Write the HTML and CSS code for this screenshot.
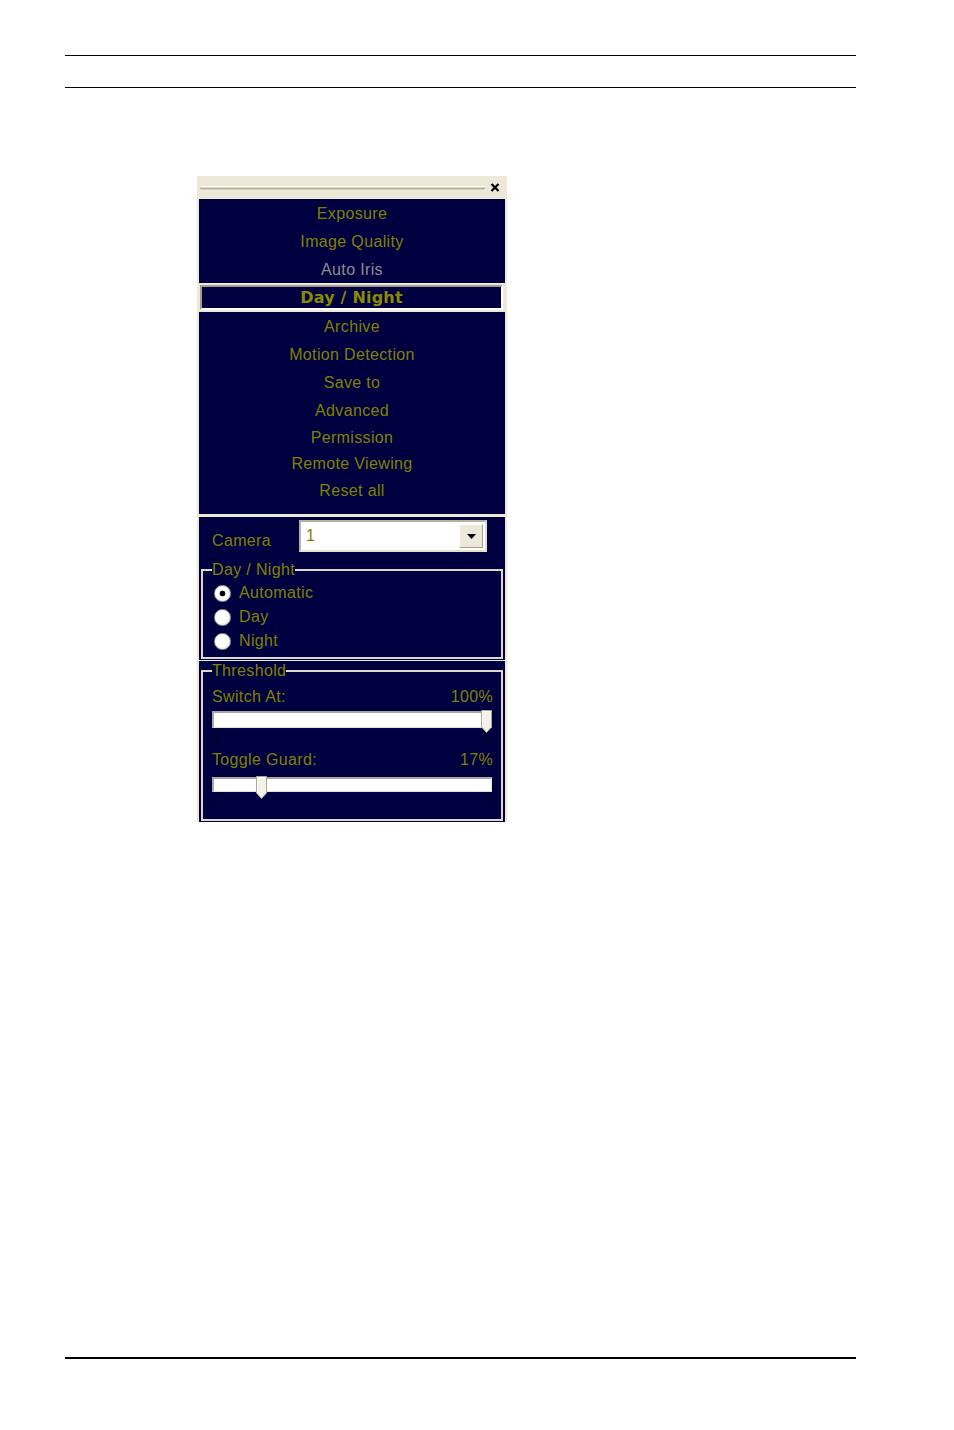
FILE: index.html
```html
<!DOCTYPE html>
<html>
<head>
<meta charset="utf-8">
<title>Day / Night settings</title>
<link rel="stylesheet" href="styles.css">
</head>
<body>
<div class="page">
  <div class="rule rule-top"></div>
  <div class="rule rule-second"></div>

  <div class="panel">
    <div class="titlebar">
      <div class="grip"></div>
      <svg class="close" width="10" height="9" viewBox="0 0 10 9"><path d="M1.5 1 L8.5 8 M8.5 1 L1.5 8" stroke="#000" stroke-width="2.2" fill="none"/></svg>
    </div>

    <div class="menu menu-a">
      <div class="item">Exposure</div>
      <div class="item">Image Quality</div>
      <div class="item disabled">Auto Iris</div>
    </div>

    <div class="sel-wrap"><div class="sel">Day / Night</div></div>

    <div class="menu menu-b">
      <div class="item">Archive</div>
      <div class="item">Motion Detection</div>
      <div class="item">Save to</div>
      <div class="item">Advanced</div>
      <div class="item tight">Permission</div>
      <div class="item tight">Remote Viewing</div>
      <div class="item">Reset all</div>
    </div>

    <div class="section section-camera">
      <div class="camera-row">
        <span class="label">Camera</span>
        <div class="combo">
          <span class="combo-value">1</span>
          <span class="combo-btn"><svg width="9" height="5" viewBox="0 0 9 5"><path d="M0 0 H9 L4.5 5 Z" fill="#000"/></svg></span>
        </div>
      </div>
      <fieldset class="group group-daynight">
        <legend>Day / Night</legend>
        <div class="radio-row"><span class="radio checked"></span><span>Automatic</span></div>
        <div class="radio-row"><span class="radio"></span><span>Day</span></div>
        <div class="radio-row"><span class="radio"></span><span>Night</span></div>
      </fieldset>
    </div>

    <div class="section section-threshold">
      <fieldset class="group group-threshold">
        <legend>Threshold</legend>
        <div class="value-row"><span>Switch At:</span><span>100%</span></div>
        <div class="slider">
          <div class="track track-1"></div>
          <svg class="thumb" style="left:269px" width="11" height="23" viewBox="0 0 11 23"><path d="M0.5 0.5 H10.5 V17 L5.5 22.5 L0.5 17 Z" fill="#F3F2EA" stroke="#A9A694" stroke-width="1"/><path d="M1.5 1.5 H9.5 M1.5 1.5 V16.5" stroke="#FFFFFF" stroke-width="1" fill="none"/></svg>
          <div class="ticks ticks-1"><i></i><i></i></div>
        </div>
        <div class="value-row row-2"><span>Toggle Guard:</span><span>17%</span></div>
        <div class="slider slider-2">
          <div class="track track-2"></div>
          <svg class="thumb" style="left:44px" width="11" height="23" viewBox="0 0 11 23"><path d="M0.5 0.5 H10.5 V17 L5.5 22.5 L0.5 17 Z" fill="#F3F2EA" stroke="#A9A694" stroke-width="1"/><path d="M1.5 1.5 H9.5 M1.5 1.5 V16.5" stroke="#FFFFFF" stroke-width="1" fill="none"/></svg>
          <div class="ticks ticks-2"><i></i><i></i></div>
        </div>
      </fieldset>
    </div>
  </div>

  <div class="rule rule-bottom"></div>
</div>
</body>
</html>
```

FILE: styles.css
```css
html, body {
  margin: 0;
  padding: 0;
  background: #ffffff;
}

.page {
  padding: 55px 0 0 65px;
  width: 791px;
  font-family: "Liberation Sans", Arial, sans-serif;
}

.rule {
  width: 791px;
  background: #000;
}
.rule-top { height: 1px; }
.rule-second { height: 1px; margin-top: 31px; }
.rule-bottom { height: 2px; margin-top: 535px; }

/* panel */
.panel {
  margin-top: 88px;
  margin-left: 132px;
  width: 310px;
  background: #ECE9D8;
  padding: 0 2px;
  box-sizing: border-box;
  font-size: 16px;
  letter-spacing: 0.35px;
  color: #808000;
}

.titlebar {
  height: 23px;
  display: flex;
  align-items: center;
  margin: 0 -2px;
  padding: 0 7px 0 3px;
}
.grip {
  flex: 1;
  height: 4px;
  margin-right: 5px;
  border-radius: 2px;
  background: linear-gradient(#ffffff 0 1px, #D9D6C7 1px 2px, #B3B09E 2px 3px, #D3D0C0 3px);
}
.close { display: block; }

/* menus */
.menu {
  background: #000040;
}
.menu .item {
  height: 28px;
  box-sizing: border-box;
  padding-top: 2px;
  line-height: 26px;
  text-align: center;
  white-space: nowrap;
}
.menu .item.tight {
  height: 26px;
  line-height: 24px;
}
.menu .item.disabled {
  color: #8C8C8C;
}
.menu-b {
  padding-bottom: 10px;
}

.sel-wrap {
  padding: 2px 2px 2px 1px;
  height: 29px;
  box-sizing: border-box;
}
.sel {
  height: 25px;
  box-sizing: border-box;
  border: 2px solid;
  border-color: #A19E8F #ffffff #ffffff #A19E8F;
  background: #000040;
  text-align: center;
  line-height: 21px;
  font-family: "DejaVu Sans", Verdana, sans-serif;
  font-weight: bold;
  font-size: 16px;
  letter-spacing: 0.2px;
  color: #8A8A00;
}

/* sections */
.section {
  background: #000040;
}
.section-camera {
  margin-top: 3px;
  padding: 3px 0 1px;
}
.section-threshold {
  margin-top: 1px;
  padding: 1px 0 1px;
}

.camera-row {
  display: flex;
  padding-left: 13px;
}
.camera-row .label {
  width: 87px;
  align-self: flex-end;
  line-height: 18px;
  margin-bottom: 2px;
}
.combo {
  width: 188px;
  height: 32px;
  box-sizing: border-box;
  border: 2px solid;
  border-color: #B5B2A2 #E4E1D3 #E4E1D3 #B5B2A2;
  background: #ffffff;
  display: flex;
  align-items: center;
  justify-content: space-between;
  padding: 0 2px 0 5px;
}
.combo-value {
  line-height: 18px;
  color: #808000;
}
.combo-btn {
  width: 24px;
  height: 24px;
  box-sizing: border-box;
  background: #ECE9D8;
  border: 1px solid;
  border-color: #ffffff #A5A294 #A5A294 #ffffff;
  display: flex;
  align-items: center;
  justify-content: center;
}
.combo-btn svg { display: block; }

/* group boxes */
.group {
  margin: 0 2px;
  border: 2px solid #DCD8C8;
  padding: 0 8px 0 9px;
  min-width: 0;
}
.group legend {
  padding: 0;
  line-height: 18px;
  white-space: nowrap;
}
.group-daynight {
  margin-top: 9px;
  padding-top: 2px;
  padding-bottom: 4px;
}
.group-threshold {
  padding-top: 8px;
  padding-bottom: 10px;
}

.radio-row {
  display: flex;
  align-items: center;
  gap: 8px;
  height: 24px;
}
.radio {
  width: 17px;
  height: 17px;
  box-sizing: border-box;
  margin-left: 2px;
  border-radius: 50%;
  border: 1px solid #A0A09A;
  background: radial-gradient(circle at 40% 40%, #ffffff 45%, #E2E1D9 100%);
}
.radio.checked {
  background:
    radial-gradient(circle, #000000 0 2.6px, transparent 3.2px),
    radial-gradient(circle at 40% 40%, #ffffff 45%, #E2E1D9 100%);
}

.value-row {
  display: flex;
  justify-content: space-between;
  line-height: 18px;
  white-space: nowrap;
}
.value-row.row-2 {
  margin-top: 8px;
}

.slider {
  position: relative;
  margin-top: 5px;
  height: 32px;
  width: 280px;
}
.slider-2 {
  margin-top: 8px;
}
.track {
  box-sizing: border-box;
  width: 280px;
  background: #ffffff;
  border-top: 2px solid #A8A79F;
  border-left: 2px solid #A8A79F;
  border-bottom: 1px solid #E4E1D3;
  border-right: 1px solid #E4E1D3;
}
.track-1 { height: 17px; }
.track-2 { height: 15px; }
.thumb {
  position: absolute;
  top: -1px;
  display: block;
}
.ticks {
  display: flex;
  justify-content: space-between;
  padding: 0 4px;
}
.ticks i {
  display: block;
  width: 1px;
  height: 6px;
  background: #000000;
}
.ticks-1 { margin-top: 7px; }
.ticks-2 { margin-top: 6px; }
```
